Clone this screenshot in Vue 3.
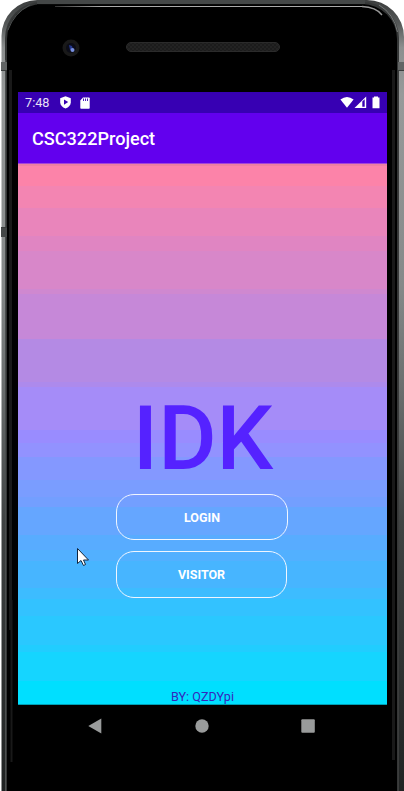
<script setup>
const bands = [
  ['#ee80a2', 2], ['#fc83a9', 20], ['#f385b2', 22], ['#e985bb', 28], ['#e085c2', 15],
  ['#d887c9', 38], ['#cf88d0', 5], ['#c688d8', 45], ['#b48ae4', 43], ['#ad8aec', 5],
  ['#a58cf8', 43], ['#998cff', 13], ['#9292ff', 14], ['#8498ff', 23], ['#7a9dff', 17],
  ['#739fff', 10], ['#65a6ff', 28], ['#58acff', 15], ['#52b0ff', 11], ['#47b5ff', 27],
  ['#3dbcff', 11], ['#33c2ff', 17], ['#2ac8ff', 29], ['#21cdff', 7], ['#15d5ff', 29],
  ['#00dfff', 23], ['#009fb5', 1],
]
let edge = 0
const gradient = 'linear-gradient(' + bands.map(([color, height]) => {
  const start = edge
  edge += height
  return `${color} ${start}px ${edge}px`
}).join(',') + ')'
</script>

<template>
  <div class="device">
    <svg class="shell" width="404" height="791" viewBox="0 0 404 791">
      <defs>
        <linearGradient id="side" x1="0" y1="0" x2="0" y2="1">
          <stop offset="0" stop-color="#3c3e3e" />
          <stop offset=".03" stop-color="#555858" />
          <stop offset=".06" stop-color="#8c8f8f" />
          <stop offset=".12" stop-color="#979a9a" />
          <stop offset=".36" stop-color="#858989" />
          <stop offset=".5" stop-color="#686c6c" />
          <stop offset=".66" stop-color="#404343" />
          <stop offset="1" stop-color="#202323" />
        </linearGradient>
        <linearGradient id="shine" x1="0" y1="0" x2="1" y2="0">
          <stop offset="0" stop-color="#333" />
          <stop offset=".15" stop-color="#aaa" />
          <stop offset="1" stop-color="#aaa" />
        </linearGradient>
        <pattern id="mesh" width="4" height="4" patternUnits="userSpaceOnUse">
          <rect width="4" height="4" fill="#1c1c1c" />
          <path d="M0 1h2M2 3h2" stroke="#292929" />
        </pattern>
      </defs>
      <path d="M1.500 791V36A36 36 0 0 1 37.500 0H367A37 37 0 0 1 404 37V791Z" fill="url(#side)" />
      <path d="M5 791V38A36 36 0 0 1 41 2H363A36 36 0 0 1 399 38V791Z" fill="#353737" />
      <path d="M7 791V39A35 35 0 0 1 42 4H362A35 35 0 0 1 397 39V791Z" fill="#000" />
      <path d="M10.500 70V630" stroke="#191919" stroke-width="3" />
      <path d="M11.500 600V762" stroke="#191919" stroke-width="2" />
      <path d="M393.500 70V760" stroke="#191919" stroke-width="3" />
      <path d="M398.500 60V791" stroke="#3b3c3c" />
      <path d="M5.500 60V791" stroke="#4c4f4f" />
      <path d="M37 2H365" stroke="#444747" stroke-width="4" />
      <path d="M37 4.500H365" stroke="#080808" />
      <path d="M55 6H362V7H55Z" fill="url(#shine)" />
      <path d="M362 6.500Q376 7 382 15" fill="none" stroke="#999" stroke-width="1.300" />
      <path d="M8 30Q14 13 30 5" fill="none" stroke="#4b4e4e" stroke-width="1" />
      <path d="M379 5Q394 14 397.500 32" fill="none" stroke="#747777" stroke-width="1" />
      <rect x="1" y="62" width="6" height="9" fill="#626565" />
      <rect x="1" y="227" width="6" height="10" fill="#454848" />
      <rect x="398" y="62" width="6" height="9" fill="#626565" />
      <path d="M1 70.500H7M398 70.500H404M1 227.500H7" stroke="#393c3c" />
      <circle cx="71" cy="48" r="8.500" fill="#191919" />
      <circle cx="71" cy="48" r="5" fill="#0b0c17" />
      <path d="M69 45l3 1 1 3-3 1Z" fill="#24368c" />
      <circle cx="72.500" cy="50" r="2" fill="#7890e0" />
      <rect x="126.500" y="42.500" width="153" height="9" rx="4.500" fill="url(#mesh)" stroke="#2b2b2b" />
    </svg>

    <main class="screen">
      <div class="status">
        <span class="time">7:48</span>
        <svg class="shield" width="11" height="13" viewBox="0 0 11 13">
          <path d="M5.500 .2L10.800 2.200V6.500Q10.500 10.600 5.500 12.500Q.5 10.600 .2 6.500V2.200Z" fill="#fff" />
          <path d="M4 3.500V8.700L8.200 6.100Z" fill="#3700b3" />
        </svg>
        <svg class="card" width="10" height="12" viewBox="0 0 10 12">
          <path d="M3 .5H9Q9.700 .5 9.700 1.200V11Q9.700 11.700 9 11.700H1Q.3 11.700 .3 11V3.500Z" fill="#fff" />
          <path d="M3.500 1.500V4M5.500 1.500V4M7.500 1.500V4" stroke="#3700b3" stroke-width=".9" />
        </svg>
        <svg class="signals" width="41" height="13" viewBox="0 0 41 13">
          <path d="M.4 3.600Q7 -1.700 13.600 3.600L7 11.800Z" fill="#fff" />
          <path d="M14.500 12L26.200 .5V12Z" fill="#fff" />
          <path d="M22.300 5.500L24.700 3.200V10.800H22.300Z" fill="#3700b3" />
          <path d="M34 .5H38V1.500H39.500V12.300H32.500V1.500H34Z" fill="#fff" />
        </svg>
      </div>
      <header class="appbar">CSC322Project</header>
      <section class="content" :style="{ backgroundImage: gradient }">
        <h1>IDK</h1>
        <button class="login">LOGIN</button>
        <button class="visitor">VISITOR</button>
        <footer>BY: QZDYpi</footer>
      </section>
    </main>

    <nav class="navigation">
      <svg width="14" height="16" viewBox="0 0 14 16"><path d="M.3 8L13.300 .5V15.500Z" fill="#999b9b" /></svg>
      <svg width="14" height="14" viewBox="0 0 14 14"><circle cx="7" cy="7" r="6.700" fill="#999b9b" /></svg>
      <svg width="14" height="14" viewBox="0 0 14 14"><rect x=".3" y=".2" width="13.500" height="13.600" rx="1" fill="#999b9b" /></svg>
    </nav>

    <svg class="pointer" width="14" height="20" viewBox="0 0 14 20">
      <path d="M.5 .5V15.500L4 12.500L6.500 17.500L8.500 16.500L6.500 12H11.500Z" fill="#fff" stroke="#10263d" />
    </svg>
  </div>
</template>

<style>
body { margin: 0; background: #fff; }
</style>

<style scoped>
.device {
  position: relative;
  box-sizing: border-box;
  width: 404px;
  height: 791px;
  padding: 92px 17px 0 18px;
  overflow: hidden;
  font-family: Roboto, sans-serif;
}
.shell { position: absolute; left: 0; top: 0; }
.screen { position: relative; height: 613px; overflow: hidden; }
.status {
  box-sizing: border-box;
  height: 21px;
  padding: 0 7px;
  display: flex;
  align-items: center;
  background: #3700b3;
  color: #e7e0f6;
}
.time { width: 35px; font-size: 12.700px; line-height: 21px; }
.card { margin-left: 9px; }
.signals { margin-left: auto; margin-right: -1px; }
.appbar {
  box-sizing: border-box;
  height: 51px;
  padding-left: 14px;
  border-bottom: 1px solid #a346d9;
  background: #6200ee;
  color: #fff;
  font-size: 18.100px;
  font-weight: 500;
  line-height: 52px;
}
.content {
  height: 541px;
  display: flex;
  flex-direction: column;
  align-items: center;
}
h1 {
  margin: 222px 0 0 1px;
  height: 108px;
  color: #5522ff;
  font-size: 89.500px;
  font-weight: 500;
  line-height: 106px;
}
button {
  box-sizing: border-box;
  flex: none;
  width: 171px;
  height: 46px;
  margin: 0 2px 12px 0;
  padding: 0;
  border: 1px solid #f0f6ff;
  border-radius: 18px;
  background: transparent;
  color: #fff;
  font: bold 12.500px Roboto, sans-serif;
}
.login { width: 172px; height: 46px; margin-right: 1px; margin-bottom: 11px; }
.visitor { height: 47px; padding-bottom: 1px; }
footer {
  margin-top: auto;
  color: #3526bc;
  font-size: 12.600px;
  line-height: 17px;
}
.navigation {
  position: relative;
  height: 42px;
  padding: 0 72px 0 70px;
  display: flex;
  align-items: center;
  justify-content: space-between;
}
.pointer { position: absolute; left: 77px; top: 548px; }
</style>
